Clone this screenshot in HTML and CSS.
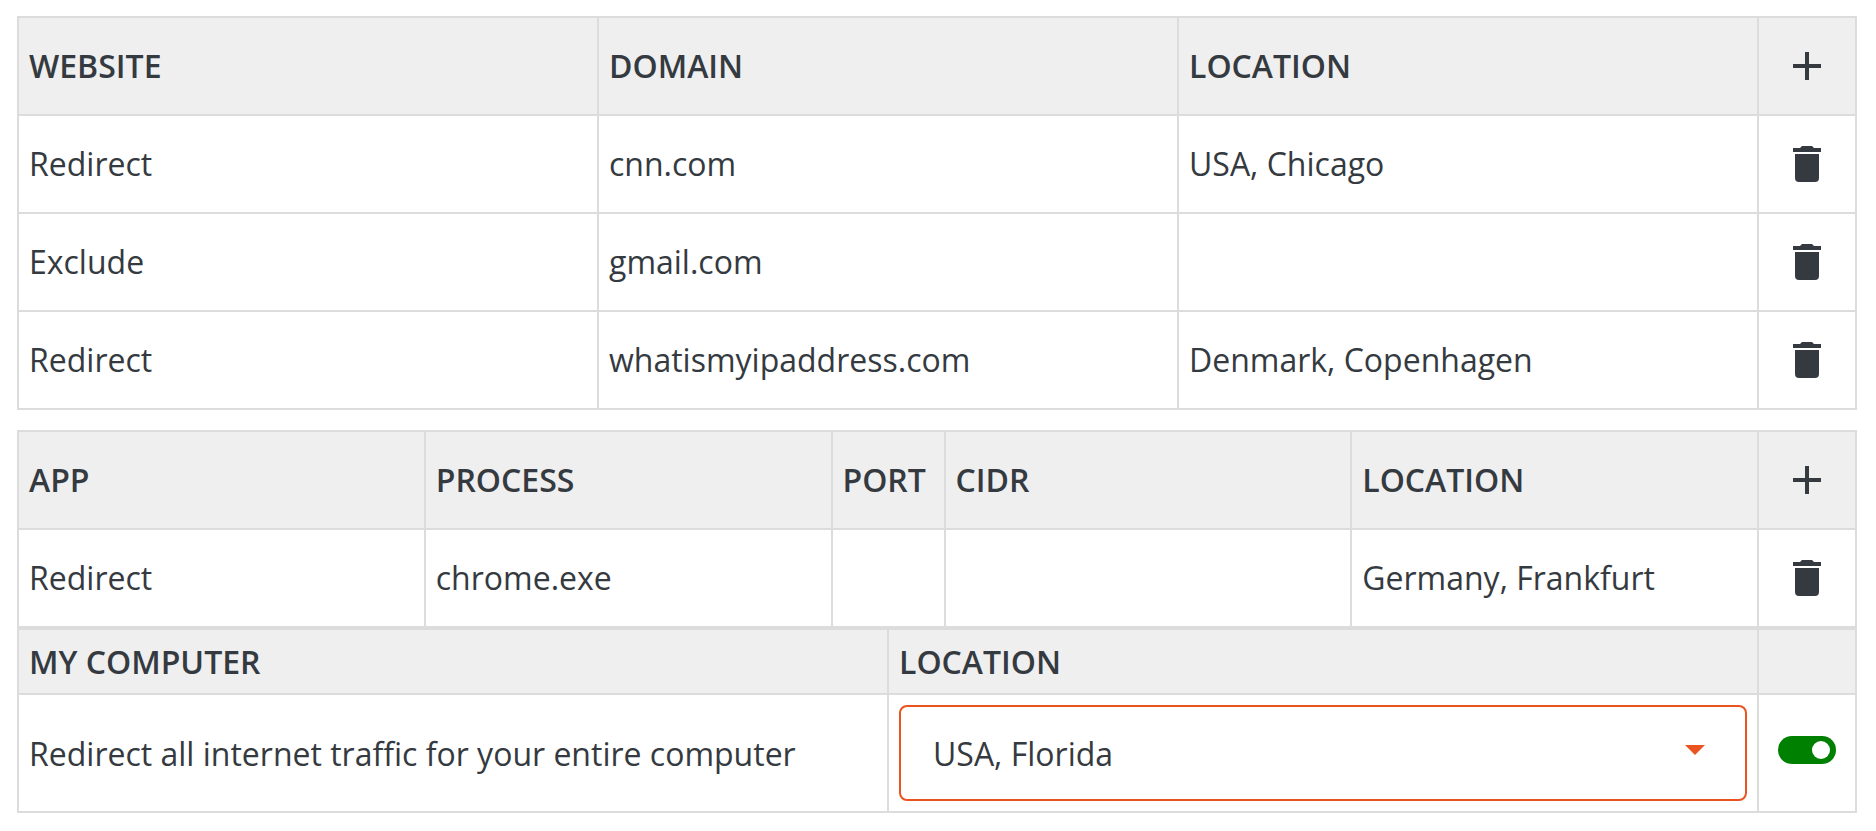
FILE: index.html
```html
<!DOCTYPE html>
<html lang="en">
<head>
<meta charset="utf-8">
<meta name="viewport" content="width=device-width, initial-scale=1">
<title>Redirect rules</title>
<link rel="stylesheet" href="styles.css">
</head>
<body>
<svg class="sprite" aria-hidden="true">
  <symbol id="plus" viewBox="0 0 24 24"><path d="M19 13H13V19H11V13H5V11H11V5H13V11H19V13Z"/></symbol>
  <symbol id="trash" viewBox="0 0 24 24"><path d="M19 4H15.5L14.5 3H9.5L8.5 4H5V6H19M6 19A2 2 0 0 0 8 21H16A2 2 0 0 0 18 19V7H6V19Z"/></symbol>
</svg>
<main class="rules">
  <table class="grid grid-list grid-websites">
    <colgroup><col><col><col><col class="col-action"></colgroup>
    <thead>
      <tr><th scope="col">WEBSITE</th><th scope="col">DOMAIN</th><th scope="col">LOCATION</th><th class="action"><button class="icon-button" type="button" aria-label="Add website"><svg class="icon"><use href="#plus"/></svg></button></th></tr>
    </thead>
    <tbody>
      <tr><td>Redirect</td><td>cnn.com</td><td>USA, Chicago</td><td class="action"><button class="icon-button" type="button" aria-label="Delete cnn.com"><svg class="icon"><use href="#trash"/></svg></button></td></tr>
      <tr><td>Exclude</td><td>gmail.com</td><td></td><td class="action"><button class="icon-button" type="button" aria-label="Delete gmail.com"><svg class="icon"><use href="#trash"/></svg></button></td></tr>
      <tr><td>Redirect</td><td>whatismyipaddress.com</td><td>Denmark, Copenhagen</td><td class="action"><button class="icon-button" type="button" aria-label="Delete whatismyipaddress.com"><svg class="icon"><use href="#trash"/></svg></button></td></tr>
    </tbody>
  </table>

  <table class="grid grid-list">
    <colgroup><col><col><col class="col-port"><col><col><col class="col-action"></colgroup>
    <thead>
      <tr><th scope="col">APP</th><th scope="col">PROCESS</th><th scope="col">PORT</th><th scope="col">CIDR</th><th scope="col">LOCATION</th><th class="action"><button class="icon-button" type="button" aria-label="Add app"><svg class="icon"><use href="#plus"/></svg></button></th></tr>
    </thead>
    <tbody>
      <tr><td>Redirect</td><td>chrome.exe</td><td></td><td></td><td>Germany, Frankfurt</td><td class="action"><button class="icon-button" type="button" aria-label="Delete chrome.exe"><svg class="icon"><use href="#trash"/></svg></button></td></tr>
    </tbody>
  </table>

  <table class="grid">
    <colgroup><col><col><col class="col-action"></colgroup>
    <thead>
      <tr><th scope="col">MY COMPUTER</th><th scope="col" id="computer-location">LOCATION</th><th></th></tr>
    </thead>
    <tbody>
      <tr>
        <td id="computer-rule">Redirect all internet traffic for your entire computer</td>
        <td>
          <div class="select">
            <select class="select-control" aria-labelledby="computer-location">
              <option selected>USA, Florida</option>
              <option>USA, Chicago</option>
              <option>Denmark, Copenhagen</option>
              <option>Germany, Frankfurt</option>
            </select>
          </div>
        </td>
        <td class="action"><input class="switch" type="checkbox" role="switch" aria-labelledby="computer-rule" checked></td>
      </tr>
    </tbody>
  </table>
</main>
</body>
</html>
```
FILE: styles.css
```css
:root {
  --ink: #343a40;
  --line: #dcdcdc;
  --head: #efefef;
  --accent: #e95420;
}

* {
  box-sizing: border-box;
}

body {
  margin: 0;
  background: #fff;
  color: var(--ink);
  font-family: "Open Sans", sans-serif;
  font-size: 32px;
  line-height: 43px;
}

.sprite {
  display: none;
}

.rules {
  padding: 16px 19px 18px 17px;
}

.grid {
  width: 100%;
  table-layout: fixed;
  border-collapse: collapse;
}

.grid-websites {
  margin-bottom: 20px;
}

.col-action {
  width: 98px;
}

.col-port {
  width: 113px;
}

th,
td {
  padding: 10px;
  border: 2px solid var(--line);
  text-align: left;
  vertical-align: middle;
}

th {
  background: var(--head);
  font-weight: 600;
}

.grid-list th,
.grid-list td {
  padding-bottom: 12px;
}

.grid .action {
  padding: 0;
}

.icon-button {
  display: flex;
  align-items: center;
  justify-content: center;
  width: 100%;
  height: 96px;
  padding: 0;
  border: 0;
  background: none;
  color: inherit;
  cursor: pointer;
}

.icon {
  width: 48px;
  height: 48px;
  fill: currentColor;
}

.select {
  position: relative;
}

.select::after {
  content: "";
  position: absolute;
  top: 40px;
  right: 42px;
  border: 10px solid transparent;
  border-top-color: var(--accent);
  border-bottom: 0;
  pointer-events: none;
}

.select-control {
  appearance: none;
  display: block;
  width: 100%;
  height: 96px;
  padding: 0 64px 0 32px;
  border: 2px solid var(--accent);
  border-radius: 8px;
  background: #fff;
  color: inherit;
  font: inherit;
}

.switch {
  appearance: none;
  display: flex;
  align-items: center;
  justify-content: flex-end;
  width: 58px;
  height: 28px;
  margin: 0 auto 6px;
  padding: 0 6px;
  border-radius: 14px;
  background: #ccc;
  cursor: pointer;
}

.switch::before {
  content: "";
  width: 18px;
  height: 18px;
  border-radius: 50%;
  background: #fff;
}

.switch:checked {
  background: #008000;
}

.switch:not(:checked) {
  justify-content: flex-start;
}
```
